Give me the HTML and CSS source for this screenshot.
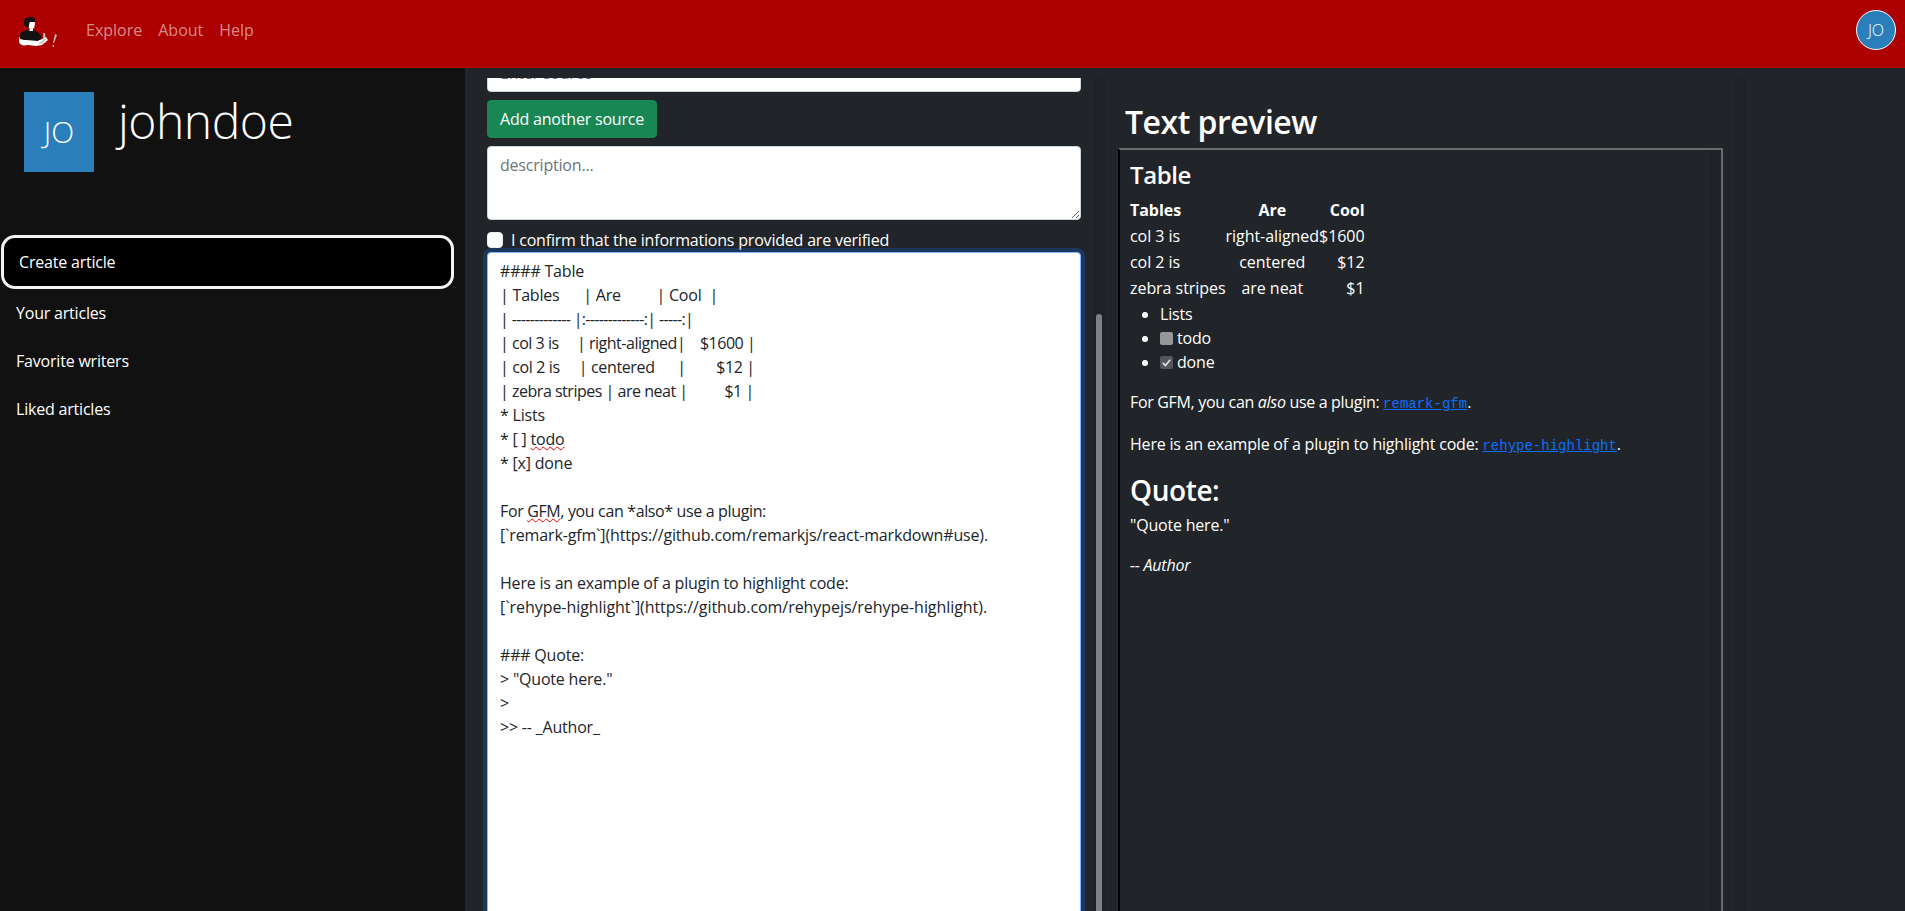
FILE: index.html
```html
<!DOCTYPE html>
<html lang="en">
<head>
<meta charset="utf-8">
<title>Create article</title>
<link rel="stylesheet" href="styles.css">
</head>
<body>
<nav class="navbar">
  <svg class="logo" viewBox="0 0 40 30" width="40" height="30" aria-hidden="true">
    <path d="M1 20L1 25C2 28 5 29 10 28L18 29 24 28 30 23 28 20 22 23 8 23C5 23 2 22 1 20z" fill="#fff"/>
    <path d="M2 17C4 14 8 13 11 13L15 13C19 14 22 16 24 21L20 24 8 23 2 22z" fill="#111"/>
    <path d="M11 5L17 5 16.500 10 15 12 15 14 11 14 12 12 10 10z" fill="#fff"/>
    <path d="M6 6C5 2 9 0 13 0 16 0 18 2 17 5L12 5C11 6 11 8 11 10L9 11C7 10 6 8 6 6z" fill="#111"/>
    <path d="M25.500 16L27 16 27.500 23 24 27 20 27 25 23z" fill="#c8c8c8"/>
    <path d="M37 17L39 18 36 26 35 26zM34.500 28L36 28 36 30 34.500 30z" fill="#bbb"/>
  </svg>
  <a class="nav-link" href="#">Explore</a>
  <a class="nav-link" href="#">About</a>
  <a class="nav-link" href="#">Help</a>
  <div class="nav-avatar">JO</div>
</nav>
<div class="layout">
  <aside class="sidebar">
    <div class="profile">
      <div class="profile-avatar">JO</div>
      <div class="profile-name">johndoe</div>
    </div>
    <ul class="side-menu">
      <li class="side-item active">Create article</li>
      <li class="side-item">Your articles</li>
      <li class="side-item">Favorite writers</li>
      <li class="side-item">Liked articles</li>
    </ul>
  </aside>
  <main class="main">
    <section class="form-col">
      <div class="source-clip"><input class="field source" placeholder="Enter source"></div>
      <button class="btn-add">Add another source</button>
      <textarea class="field description" placeholder="description..."></textarea>
      <label class="confirm"><input type="checkbox" class="confirm-box"><span>I confirm that the informations provided are verified</span></label>
      <div class="editor"><div class="editor-line">#### Table</div><div class="editor-line">| Tables&nbsp;&nbsp;&nbsp;&nbsp;&nbsp; | Are&nbsp;&nbsp;&nbsp;&nbsp;&nbsp;&nbsp;&nbsp;&nbsp; | Cool&nbsp; |</div><div class="editor-line dashes">| ------------- |:-------------:| -----:|</div><div class="editor-line tight">| col 3 is&nbsp;&nbsp;&nbsp;&nbsp; | right-aligned|&nbsp;&nbsp;&nbsp; $1600 |</div><div class="editor-line mid">| col 2 is&nbsp;&nbsp;&nbsp;&nbsp; | centered&nbsp;&nbsp;&nbsp;&nbsp;&nbsp; |&nbsp;&nbsp;&nbsp;&nbsp;&nbsp;&nbsp;&nbsp; $12 |</div><div class="editor-line tight">| zebra stripes | are neat |&nbsp;&nbsp;&nbsp;&nbsp;&nbsp;&nbsp;&nbsp;&nbsp;&nbsp; $1 |</div><div class="editor-line">* Lists</div><div class="editor-line">* [ ] <span class="misspelled">todo</span></div><div class="editor-line">* [x] done</div><div class="editor-line">&nbsp;</div><div class="editor-line mid">For <span class="misspelled">GFM</span>, you can *also* use a plugin:</div><div class="editor-line url-a">[`remark-gfm`](https://github.com/remarkjs/react-markdown#use).</div><div class="editor-line">&nbsp;</div><div class="editor-line">Here is an example of a plugin to highlight code:</div><div class="editor-line wide">[`rehype-highlight`](https://github.com/rehypejs/rehype-highlight).</div><div class="editor-line">&nbsp;</div><div class="editor-line">### Quote:</div><div class="editor-line">&gt; "Quote here."</div><div class="editor-line">&gt;</div><div class="editor-line">&gt;&gt; -- _Author_</div></div>
    </section>
    <div class="scroll-track"><div class="scroll-thumb"></div></div>
    <section class="preview-col">
      <h2 class="preview-title">Text preview</h2>
      <div class="preview-box">
        <div class="preview-scroll">
          <h4 class="md-h4">Table</h4>
          <table class="md-table">
            <thead><tr><th class="left">Tables</th><th class="center">Are</th><th class="right">Cool</th></tr></thead>
            <tbody>
              <tr><td class="left">col 3 is</td><td class="center">right-aligned</td><td class="right">$1600</td></tr>
              <tr><td class="left">col 2 is</td><td class="center">centered</td><td class="right">$12</td></tr>
              <tr><td class="left">zebra stripes</td><td class="center">are neat</td><td class="right">$1</td></tr>
            </tbody>
          </table>
          <ul class="md-list">
            <li>Lists</li>
            <li><span class="task todo"></span>todo</li>
            <li><span class="task done"><svg viewBox="0 0 14 14" width="14" height="14"><path d="M3 7.500l2.800 2.800L11 4" fill="none" stroke="#e4e4e6" stroke-width="1.800"/></svg></span>done</li>
          </ul>
          <p class="md-p md-p-tight">For GFM, you can <em>also</em> use a plugin: <a class="md-link" href="#"><code>remark-gfm</code></a>.</p>
          <p class="md-p">Here is an example of a plugin to highlight code: <a class="md-link" href="#"><code>rehype-highlight</code></a>.</p>
          <h3 class="md-h3">Quote:</h3>
          <p class="md-p">"Quote here."</p>
          <p class="md-p"><em>-- Author</em></p>
        </div>
      </div>
    </section>
  </main>
</div>
</body>
</html>
```
FILE: styles.css
```css
* { box-sizing: border-box; }
html, body { margin: 0; height: 100%; overflow: hidden; }
body {
  background: #212529;
  color: #fff;
  font-family: "Open Sans", "Noto Sans", sans-serif;
  font-size: 16px;
  line-height: 24px;
  letter-spacing: -0.2px;
}
.navbar {
  height: 68px;
  background: #ad0000;
  display: flex;
  align-items: center;
  padding: 0 9px 8px 18px;
}
.logo { align-self: flex-start; margin: 17px 28px 0 0; flex: none; }
.nav-link {
  color: rgba(255,255,255,.55);
  text-decoration: none;
  margin-right: 16px;
  letter-spacing: 0;
}
.nav-avatar {
  margin-left: auto;
  width: 40px;
  height: 40px;
  border-radius: 50%;
  border: 1px solid #fff;
  background: #2a7fba;
  font-size: 16px;
  font-weight: 300;
  letter-spacing: 0;
  display: flex;
  align-items: center;
  justify-content: center;
}
.layout { display: flex; height: 843px; }
.sidebar { width: 465px; background: #111; flex: none; padding-top: 24px; }
.profile { display: flex; padding-left: 24px; align-items: flex-start; }
.profile-avatar {
  width: 70px;
  height: 80px;
  background: #2a7fba;
  font-size: 30px;
  font-weight: 300;
  letter-spacing: 0;
  display: flex;
  align-items: center;
  justify-content: center;
}
.profile-name { font-size: 48px; font-weight: 300; line-height: 58px; margin-left: 24px; letter-spacing: -0.5px; }
.side-menu { list-style: none; margin: 63px 0 0; padding: 0 0 0 1px; }
.side-item { height: 48px; padding: 12px 15px; margin-right: 11px; }
.side-item.active {
  height: 54px;
  padding: 12px 15px;
  background: #000;
  border: 3px solid #f4f4f4;
  border-radius: 14px;
}
.main { flex: 1; display: flex; min-width: 0; }
.form-col {
  width: 602px;
  margin-left: 18px;
  flex: none;
  display: flex;
  flex-direction: column;
  overflow: hidden;
  padding: 10px 4px 0;
}
.source-clip { height: 14px; overflow: hidden; position: relative; flex: none; }
.field {
  display: block;
  width: 100%;
  background: #fff;
  border: 1px solid #ced4da;
  border-radius: 4px;
  font: inherit;
  letter-spacing: inherit;
  color: #212529;
  padding: 6px 12px;
}
.field::placeholder { color: #6c757d; opacity: 1; }
.source { position: absolute; bottom: 0; left: 0; height: 38px; }
.btn-add {
  flex: none;
  align-self: flex-start;
  margin-top: 8px;
  height: 38px;
  width: 170px;
  padding: 0;
  background: #198754;
  color: #fff;
  border: 1px solid #198754;
  border-radius: 4px;
  font: inherit;
  letter-spacing: inherit;
}
.description { height: 74px; margin-top: 8px; flex: none; }
.confirm { display: flex; align-items: center; height: 24px; margin-top: 8px; flex: none; }
.confirm-box {
  appearance: none;
  width: 16px;
  height: 16px;
  margin: 0 8px 0 0;
  background: #fff;
  border-radius: 4px;
  border: 1px solid #eee;
}
.editor {
  flex: none;
  height: 800px;
  background: #fff;
  color: #212529;
  border: 1px solid #86b7fe;
  border-radius: 4px;
  box-shadow: 0 0 0 4px rgba(13,110,253,.25);
  padding: 6px 12px;
}
.editor-line { height: 24px; white-space: nowrap; }
.editor-line.dashes { letter-spacing: -0.65px; }
.editor-line.tight { letter-spacing: -0.48px; }
.editor-line.mid { letter-spacing: -0.36px; }
.editor-line.wide { letter-spacing: -0.06px; }
.editor-line.url-a { letter-spacing: -0.15px; }
.misspelled { text-decoration: underline wavy #e00; text-decoration-thickness: 1px; }
.scroll-track {
  width: 12px;
  margin: 10px 0 0 8px;
  flex: none;
  padding: 236px 3px 0;
  background: #1e2226;
}
.scroll-thumb { width: 6px; height: 100%; background: #808184; border-radius: 3px 3px 0 0; }
.preview-col {
  width: 642px;
  margin-top: 10px;
  flex: none;
  padding: 25px 12px 0 13px;
  border-right: 12px solid #1e2226;
  overflow: hidden;
}
.preview-title { font-size: 32px; font-weight: 600; line-height: 38px; margin: 0 0 7px 7px; letter-spacing: -0.5px; }
.preview-box {
  height: 800px;
  border-width: 2px;
  border-style: solid;
  border-color: #6a6b6d #6a6b6d #6a6b6d #000;
}
.preview-scroll {
  height: 100%;
  border-right: 12px solid #1e2226;
  padding: 10px 10px;
}
.md-h4 { font-size: 24px; font-weight: 600; line-height: 29px; margin: 0 0 8px; letter-spacing: -0.4px; }
.md-table { border-collapse: collapse; letter-spacing: -0.05px; }
.md-table th, .md-table td { padding: 0; height: 26px; line-height: 26px; }
.md-table th { font-weight: 700; }
.left { text-align: left; }
.center { text-align: center; }
.right { text-align: right; }
.md-list { margin: 1px 0 16px; padding-left: 30px; }
.md-list li { height: 24px; }
.task {
  display: inline-block;
  width: 13px;
  height: 13px;
  margin: 0 4px 0 0;
  border-radius: 2px;
  vertical-align: -1px;
}
.task.todo { background: #97979a; }
.task.done { background: #55565c; }
.task svg { display: block; width: 13px; height: 13px; }
.md-p { margin: 0 0 16px; }
.md-p-tight { letter-spacing: -0.32px; }
.md-h3 { font-size: 28px; font-weight: 600; line-height: 34px; margin: -1px 0 6px; letter-spacing: -0.4px; }
.md-link { color: #0d6efd; text-decoration: underline; }
code { font-family: "Liberation Mono", monospace; font-size: 14px; color: #0d6efd; letter-spacing: 0; }
```
